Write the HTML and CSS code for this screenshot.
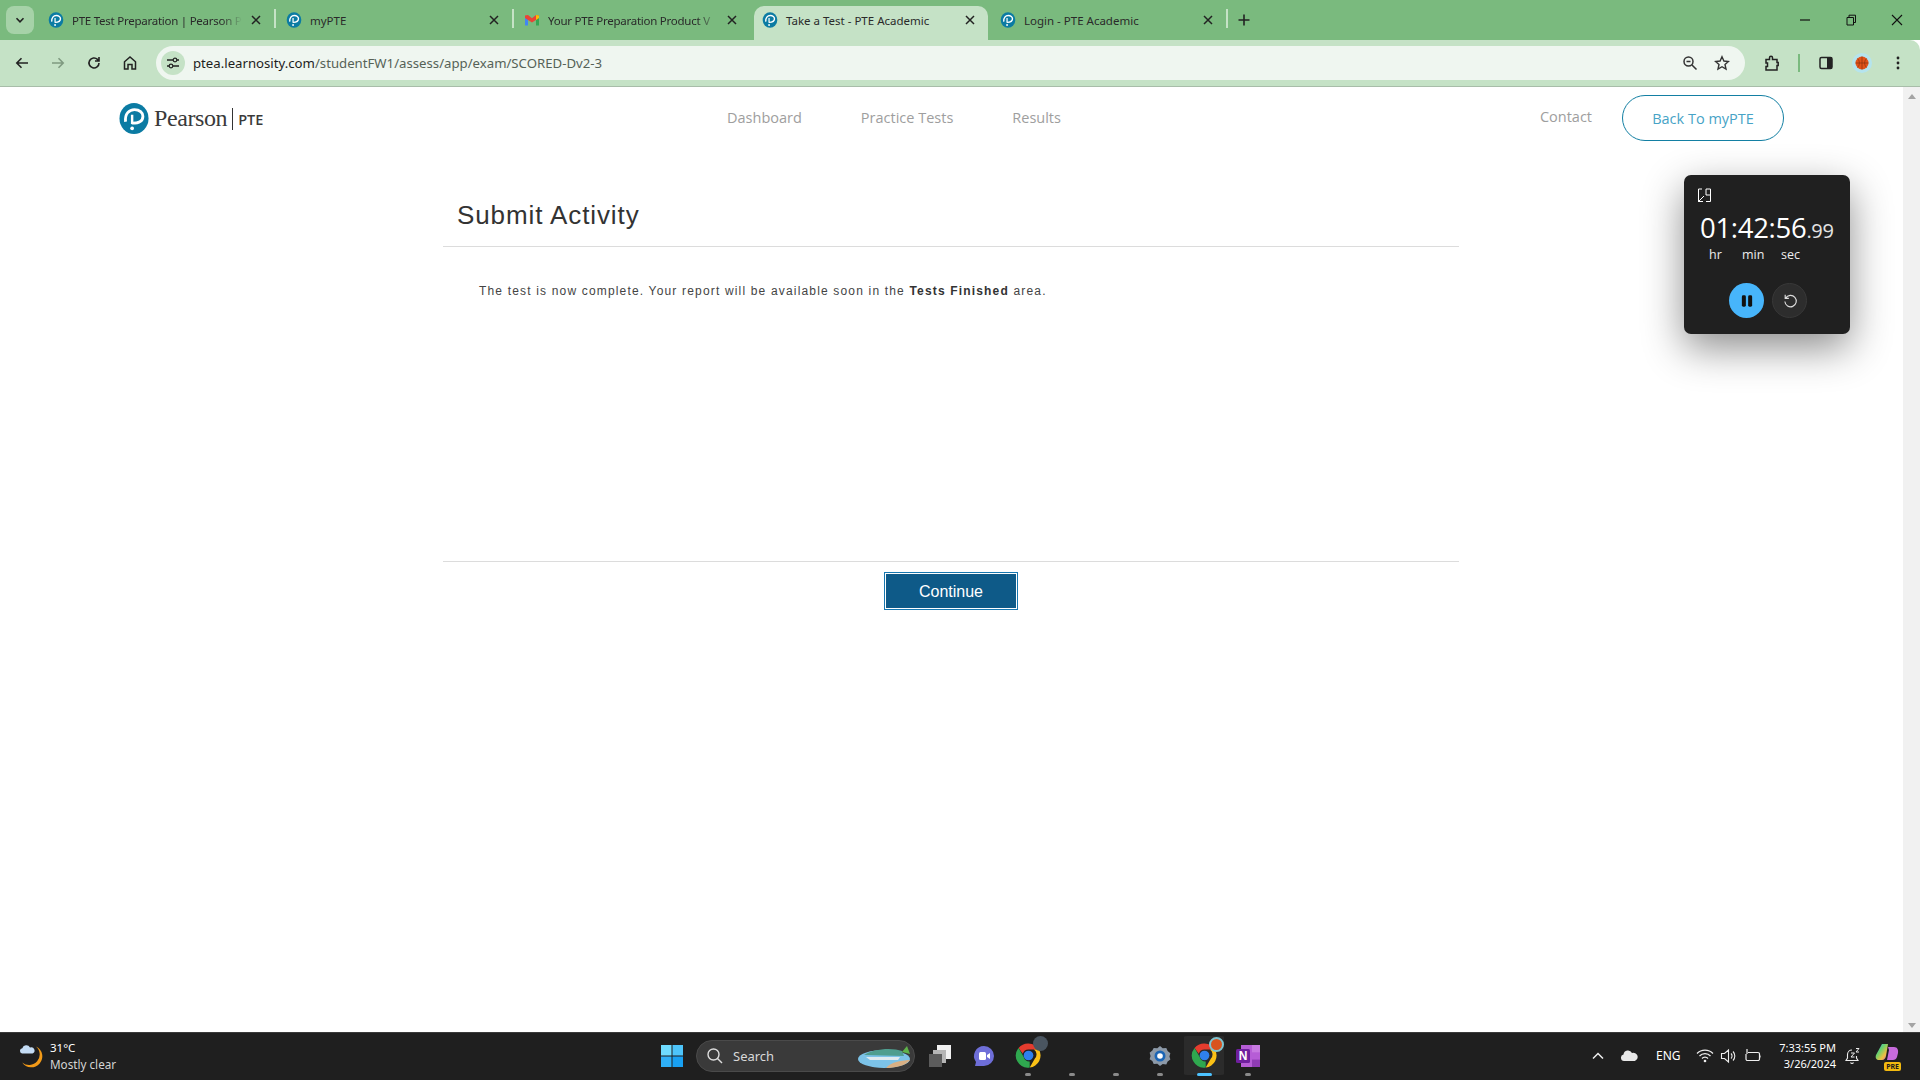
FILE: index.html
```html
<!DOCTYPE html>
<html lang="en">
<head>
  <meta charset="UTF-8">
  <title>Take a Test - PTE Academic</title>
  <link rel="stylesheet" href="styles.css">
</head>
<body>
  <svg class="defs" width="0" height="0">
    <symbol id="pearson" viewBox="0 0 32 34">
      <ellipse cx="16" cy="17" rx="15.500" ry="16.500" fill="#0b7ba3"/>
      <path d="M7 20.500C6 12 11 7.500 16.500 7.500c5.500 0 9 3.500 9 7 0 4.500-4 7.500-11.500 7.500" fill="none" stroke="#fff" stroke-width="3"/>
      <path d="M14 13v10" fill="none" stroke="#fff" stroke-width="2.600"/>
      <circle cx="14" cy="27.500" r="2" fill="#fff"/>
    </symbol>
    <symbol id="chrome" viewBox="0 0 48 48">
      <path d="M24 4a20 20 0 0 1 17.300 10H24a10 10 0 0 0-9.500 7L7.600 11.500A20 20 0 0 1 24 4z" fill="#e53c2e"/>
      <path d="M41.300 14A20 20 0 0 1 26 43.900l8.600-14.900A10 10 0 0 0 33 14z" fill="#fbc116"/>
      <path d="M7.600 11.500l8.500 15A10 10 0 0 0 26 33.800l-0 10.100A20 20 0 0 1 7.600 11.500z" fill="#2fa84f"/>
      <circle cx="24" cy="24" r="8" fill="#2f80ed"/>
    </symbol>
    <symbol id="close" viewBox="0 0 16 16">
      <path d="M4 4l8 8M12 4l-8 8" stroke="#222" stroke-width="1.500" fill="none"/>
    </symbol>
  </svg>

  <div class="tabstrip">
    <div class="tab-menu">
      <svg width="10" height="10" viewBox="0 0 10 10"><path d="M1.500 3.200L5 6.800l3.500-3.600" fill="none" stroke="#222" stroke-width="1.600"/></svg>
    </div>
    <div class="tab">
      <svg class="favicon"><use href="#pearson"/></svg>
      <span class="tab-title fade">PTE Test Preparation | Pearson P</span>
      <svg class="tab-close"><use href="#close"/></svg>
    </div>
    <div class="tab">
      <svg class="favicon"><use href="#pearson"/></svg>
      <span class="tab-title">myPTE</span>
      <svg class="tab-close"><use href="#close"/></svg>
    </div>
    <div class="tab no-sep">
      <svg class="favicon" viewBox="0 0 16 16">
        <path d="M1 3.500v10h3V7z" fill="#4285f4"/>
        <path d="M15 3.500v10h-3V7z" fill="#34a853"/>
        <path d="M1 3.500L4 3l4 3.200L12 3l3 .5V6L8 10.500 1 6z" fill="#ea4335"/>
        <path d="M12 3l3 .5V6l-3 2z" fill="#fbbc04"/>
      </svg>
      <span class="tab-title fade">Your PTE Preparation Product V</span>
      <svg class="tab-close"><use href="#close"/></svg>
    </div>
    <div class="tab active no-sep">
      <svg class="favicon"><use href="#pearson"/></svg>
      <span class="tab-title">Take a Test - PTE Academic</span>
      <svg class="tab-close"><use href="#close"/></svg>
    </div>
    <div class="tab">
      <svg class="favicon"><use href="#pearson"/></svg>
      <span class="tab-title">Login - PTE Academic</span>
      <svg class="tab-close"><use href="#close"/></svg>
    </div>
    <svg class="new-tab" width="16" height="16" viewBox="0 0 16 16"><path d="M8 2.500v11M2.500 8h11" stroke="#222" stroke-width="1.600"/></svg>
    <div class="window-controls">
      <svg width="14" height="14" viewBox="0 0 14 14"><path d="M2 7h10" stroke="#111" stroke-width="1.200"/></svg>
      <svg width="14" height="14" viewBox="0 0 14 14"><path d="M3 4.500h6.500v7.500H3zM5 4.500V2.200h6.500v7.300H9.500" fill="none" stroke="#111"/></svg>
      <svg width="14" height="14" viewBox="0 0 14 14"><path d="M2 2l10 10M12 2L2 12" stroke="#111" stroke-width="1.100"/></svg>
    </div>
  </div>

  <div class="toolbar">
    <svg class="tool" viewBox="0 0 16 16"><path d="M14 8H3M7.500 3.200L2.800 8l4.700 4.800" fill="none" stroke="#222" stroke-width="1.600"/></svg>
    <svg class="tool" viewBox="0 0 16 16"><path d="M2 8h11M8.500 3.200L13.200 8l-4.700 4.800" fill="none" stroke="#7f9a80" stroke-width="1.600"/></svg>
    <svg class="tool" viewBox="0 0 16 16"><path d="M13 8a5 5 0 1 1-1.500-3.600L13 6M13 2v4H9" fill="none" stroke="#222" stroke-width="1.600"/></svg>
    <svg class="tool" viewBox="0 0 16 16"><path d="M2.500 14V6.800L8 2l5.500 4.800V14h-3.500V9.500H6V14z" fill="none" stroke="#222" stroke-width="1.500"/></svg>
    <div class="omnibox">
      <span class="site-info">
        <svg width="14" height="14" viewBox="0 0 14 14"><path d="M1 4h6M11 4h2M1 10h2M7 10h6" stroke="#222" stroke-width="1.300"/><circle cx="9" cy="4" r="1.800" fill="none" stroke="#222" stroke-width="1.200"/><circle cx="5" cy="10" r="1.800" fill="none" stroke="#222" stroke-width="1.200"/></svg>
      </span>
      <span class="url"><span class="url-host">ptea.learnosity.com</span>/studentFW1/assess/app/exam/SCORED-Dv2-3</span>
      <svg class="omni-icon" viewBox="0 0 16 16"><circle cx="6.500" cy="6.500" r="4.500" fill="none" stroke="#333" stroke-width="1.500"/><path d="M4.500 6.500h4M10 10l4.500 4.500" stroke="#333" stroke-width="1.500"/></svg>
      <svg class="omni-icon" viewBox="0 0 16 16"><path d="M8 1.800l1.900 4.200 4.500.5-3.400 3 1 4.500-4-2.300-4 2.300 1-4.500-3.400-3 4.500-.5z" fill="none" stroke="#333" stroke-width="1.400"/></svg>
    </div>
    <svg class="tool ext" viewBox="0 0 16 16"><path d="M2 4.500h3.500V2.800a1.500 1.500 0 0 1 3 0v1.700H13v3h1.200v3H13v4.500H2v-3.500h1.500v-3.500H2z" fill="none" stroke="#222" stroke-width="1.500"/></svg>
    <span class="tool-sep"></span>
    <svg class="tool side" viewBox="0 0 16 16"><rect x="2" y="2.500" width="12" height="11" rx="1.500" fill="none" stroke="#222" stroke-width="1.500"/><path d="M9 2.500h5v11H9z" fill="#222"/></svg>
    <span class="avatar">
      <svg width="14" height="14" viewBox="0 0 14 14"><circle cx="7" cy="7" r="6.500" fill="#e2531a"/><path d="M7 .5v13M.5 7h13M2.500 2.500c2.500 2.500 2.500 6.500 0 9M11.500 2.500c-2.500 2.500-2.500 6.500 0 9" fill="none" stroke="#8a3210" stroke-width=".7"/></svg>
    </span>
    <svg class="tool menu" viewBox="0 0 16 16"><circle cx="8" cy="3" r="1.400" fill="#222"/><circle cx="8" cy="8" r="1.400" fill="#222"/><circle cx="8" cy="13" r="1.400" fill="#222"/></svg>
  </div>

  <div class="viewport">
    <div class="page">
      <header class="site-header">
        <div class="logo">
          <svg class="logo-mark"><use href="#pearson"/></svg>
          <span class="logo-name">Pearson</span>
          <span class="logo-bar"></span>
          <span class="logo-pte">PTE</span>
        </div>
        <nav class="nav">
          <a>Dashboard</a>
          <a>Practice Tests</a>
          <a>Results</a>
        </nav>
        <a class="contact">Contact</a>
        <a class="back-btn">Back To myPTE</a>
      </header>

      <main class="activity">
        <h1 class="activity-title">Submit Activity</h1>
        <p class="activity-text">The test is now complete. Your report will be available soon in the <strong>Tests Finished</strong> area.</p>
        <div class="activity-footer">
          <button class="continue">Continue</button>
        </div>
      </main>

      <div class="timer">
        <svg class="timer-expand" width="15" height="15" viewBox="0 0 15 15"><path d="M5 1H1.500v12.500H6M9 1h4.500v12.500H9M1.500 13.500L7 8M1.500 9.500v4h4M9 1v6h4.500" fill="none" stroke="#fff"/></svg>
        <div class="timer-digits">01:42:56<small>.99</small></div>
        <div class="timer-units"><span>hr</span><span>min</span><span>sec</span></div>
        <div class="timer-buttons">
          <span class="timer-pause"><svg width="16" height="16" viewBox="0 0 14 14"><rect x="2.500" y="2" width="3.500" height="10" rx="1.200" fill="#111"/><rect x="8" y="2" width="3.500" height="10" rx="1.200" fill="#111"/></svg></span>
          <span class="timer-reset"><svg width="16" height="16" viewBox="0 0 14 14"><path d="M3.200 4.500a5 5 0 1 1-.7 3M2.800 1.500v3.200H6" fill="none" stroke="#ddd"/></svg></span>
        </div>
      </div>
    </div>

    <div class="scrollbar">
      <span class="arrow-up"></span>
      <span class="arrow-down"></span>
    </div>
  </div>

  <footer class="taskbar">
    <div class="weather">
      <svg width="24" height="24" viewBox="0 0 24 24">
        <path d="M17 2.400A11 11 0 1 1 3.200 18.500 10 10 0 0 0 17 2.400z" fill="#f29a18"/>
        <path d="M3 9.500a2.700 2.700 0 0 1 .3-5.300A4.200 4.200 0 0 1 11 3.500a3 3 0 0 1 2.500 6z" fill="#c4dcf5"/>
      </svg>
      <div class="weather-text">
        <div class="temp">31°C</div>
        <div class="cond">Mostly clear</div>
      </div>
    </div>

    <div class="task-center">
      <svg class="start" width="24" height="24" viewBox="0 0 24 24">
        <rect x="1" y="1" width="10.500" height="10.500" fill="#6fdcff"/><rect x="12.500" y="1" width="10.500" height="10.500" fill="#4dc4fa"/>
        <rect x="1" y="12.500" width="10.500" height="10.500" fill="#2fb0f7"/><rect x="12.500" y="12.500" width="10.500" height="10.500" fill="#18a0f2"/>
      </svg>
      <div class="search">
        <svg width="18" height="18" viewBox="0 0 18 18"><circle cx="7.500" cy="7.500" r="5.500" fill="none" stroke="#ddd" stroke-width="1.400"/><path d="M11.500 11.500l4.500 4.500" stroke="#ddd" stroke-width="1.400"/></svg>
        <span class="search-label">Search</span>
        <svg class="search-art" width="52" height="24" viewBox="0 0 52 24">
          <ellipse cx="26" cy="15" rx="26" ry="9" fill="#7cc3e8"/>
          <path d="M28 24c8 0 20-2 24-8-6 0-20 2-24 8z" fill="#d9b084"/>
          <path d="M6 11c8-6 28-8 38-4l2 5z" fill="#4f9e8f"/>
          <path d="M44 8l5-6 3 8z" fill="#5fb24a"/>
          <path d="M8 13h34l-2 3H12z" fill="#dfeaf0"/>
        </svg>
      </div>
      <span class="task-item pinned">
        <svg width="24" height="24" viewBox="0 0 24 24"><rect x="9" y="1" width="14" height="14" fill="#f1f1f1"/><rect x="5" y="6" width="13" height="13" fill="#b5b5b5"/><rect x="1" y="10" width="13" height="13" fill="#5c5c5c"/></svg>
      </span>
      <span class="task-item pinned">
        <svg width="24" height="24" viewBox="0 0 24 24"><path d="M12 2a10 10 0 0 1 0 20H3l1-4a10 10 0 0 1 8-16z" fill="#6e6ed8"/><rect x="7" y="8" width="7" height="8" rx="1.500" fill="#fff"/><path d="M15 11l3-2v6l-3-2z" fill="#fff"/></svg>
      </span>
      <span class="task-item running">
        <svg class="chrome-icon"><use href="#chrome"/></svg>
        <span class="person-badge"></span>
      </span>
      <span class="task-item running"></span>
      <span class="task-item running"></span>
      <span class="task-item running">
        <svg width="24" height="24" viewBox="0 0 24 24"><path d="M12 1l3 2.500 4-.5 1.500 3.500 3 2.500-1 3.500 1 3.500-3 2-1.500 3.500-4-.5L12 23l-3-2.500-4 .5-1.500-3.500-3-2 1-3.500-1-3.500 3-2.500L5 3l4 .5z" fill="#8c99a8" transform="translate(1.200 1.200) scale(.9)"/><circle cx="12" cy="12" r="5.500" fill="#1b65b5"/><circle cx="12" cy="12" r="2.800" fill="#fff"/></svg>
      </span>
      <span class="task-item running active">
        <svg class="chrome-icon"><use href="#chrome"/></svg>
        <span class="ball-badge"></span>
      </span>
      <span class="task-item running">
        <svg width="24" height="24" viewBox="0 0 24 24"><rect x="5" y="1" width="19" height="22" fill="#b65dd6"/><rect x="16" y="1" width="8" height="7.300" fill="#c77ae0"/><rect x="16" y="15.600" width="8" height="7.400" fill="#8f3cb4"/><rect x="0" y="5" width="14" height="14" rx="1.500" fill="#6f1f9e"/><text x="7" y="16" class="onenote-n">N</text></svg>
      </span>
    </div>

    <div class="tray">
      <svg class="tray-chevron" width="14" height="14" viewBox="0 0 14 14"><path d="M2 9.500L7 4.500l5 5" fill="none" stroke="#eee" stroke-width="1.500"/></svg>
      <svg class="tray-cloud" width="18" height="14" viewBox="0 0 18 14"><path d="M4 12a3.300 3.300 0 0 1-.5-6.500A4.500 4.500 0 0 1 12 4a3.800 3.800 0 0 1 2.800 8z" fill="#e8e8e8"/></svg>
      <span class="tray-lang">ENG</span>
      <svg class="tray-icon" width="18" height="16" viewBox="0 0 18 16"><path d="M1 5.500a11 11 0 0 1 16 0M3.500 8a7.500 7.500 0 0 1 11 0M6 10.500a4 4 0 0 1 6 0" fill="none" stroke="#eee" stroke-width="1.200"/><circle cx="9" cy="13" r="1.300" fill="#eee"/></svg>
      <svg class="tray-icon" width="18" height="16" viewBox="0 0 18 16"><path d="M1.500 5.500h3L8.500 2v12l-4-3.500h-3zM11 5.500a3.500 3.500 0 0 1 0 5M13 3.500a6.500 6.500 0 0 1 0 9" fill="none" stroke="#eee" stroke-width="1.100"/></svg>
      <svg class="tray-icon" width="18" height="16" viewBox="0 0 18 16"><path d="M4 4.500h10a1.500 1.500 0 0 1 1.500 1.500v5a1.500 1.500 0 0 1-1.500 1.500H3.500A1.500 1.500 0 0 1 2 11V6M16 7.500v2" fill="none" stroke="#eee" stroke-width="1.200"/><path d="M3 1v5" stroke="#eee" stroke-width="1.200"/></svg>
      <div class="clock">
        <div>7:33:55 PM</div>
        <div>3/26/2024</div>
      </div>
      <svg class="tray-bell" width="16" height="18" viewBox="0 0 16 18"><path d="M8 3a4.500 4.500 0 0 0-4.500 4.500V11L2 13.500h12L12.500 11V9M6.500 15.500a1.700 1.700 0 0 0 3 0" fill="none" stroke="#eee" stroke-width="1.100"/><path d="M7 6h3.500L7 10h3.500M12 1.500h3L12 5h3" fill="none" stroke="#eee"/></svg>
      <span class="copilot">
        <svg width="24" height="20" viewBox="0 0 24 20">
          <defs>
            <linearGradient id="cop" x1="0" y1="0" x2="1" y2="1">
              <stop offset="0" stop-color="#2fb7e8"/><stop offset=".4" stop-color="#6fd06a"/><stop offset=".7" stop-color="#f0c040"/><stop offset="1" stop-color="#d85cc8"/>
            </linearGradient>
          </defs>
          <path d="M7 1h6l-2 12c-.4 2-1.500 4-4 4H4c-2.500 0-4-2-3-5z" fill="url(#cop)"/>
          <path d="M13 4h6c3.500 0 4.500 3 4 6l-1 4c-.6 2-2 3-4 3h-6l2-10z" fill="#c76bdc"/>
        </svg>
        <span class="pre">PRE</span>
      </span>
    </div>
  </footer>
</body>
</html>
```

FILE: styles.css
```css
* {
  box-sizing: border-box;
}

html,
body {
  margin: 0;
  height: 100%;
}

body {
  width: 1920px;
  height: 1080px;
  overflow: hidden;
  display: flex;
  flex-direction: column;
  font-family: "Open Sans", "Liberation Sans", sans-serif;
  background-color: #ffffff;
}

.defs {
  position: absolute;
}

/* browser tabs */
.tabstrip {
  height: 40px;
  display: flex;
  background-color: #7aba7e;
  padding-left: 6px;
}

.tab-menu {
  width: 28px;
  height: 28px;
  margin: 6px 4px 0 0;
  border-radius: 8px;
  background-color: #a6d2a8;
  display: flex;
  align-items: center;
  justify-content: center;
}

.tab {
  position: relative;
  width: 238px;
  height: 34px;
  margin-top: 6px;
  padding: 0 12px 6px 10px;
  display: flex;
  align-items: center;
  font-family: "Noto Sans", sans-serif;
  font-size: 11.5px;
  color: #2a2a2a;
}

.tab::after {
  content: "";
  position: absolute;
  right: 0;
  top: 3px;
  height: 19px;
  width: 2px;
  background-color: #c5e2c6;
}

.tab.no-sep::after {
  display: none;
}

.tab.active {
  background-color: #c5e2c6;
  border-radius: 10px 10px 0 0;
  margin-left: 2px;
  margin-right: 2px;
  width: 234px;
  padding-left: 8px;
  padding-right: 10px;
}

.favicon {
  width: 16px;
  height: 16px;
  flex: none;
}

.tab-title {
  margin-left: 8px;
  white-space: nowrap;
}

.tab-title.fade {
  width: 170px;
  letter-spacing: -0.25px;
  -webkit-mask-image: linear-gradient(to right, #000 150px, transparent 170px);
  mask-image: linear-gradient(to right, #000 150px, transparent 170px);
}

.tab-close {
  width: 16px;
  height: 16px;
  margin-left: auto;
  flex: none;
}

.new-tab {
  margin: 12px 0 0 8px;
}

.window-controls {
  margin-left: auto;
  height: 30px;
  padding: 13px 16px 0 0;
  display: flex;
  gap: 32px;
}

/* browser toolbar */
.toolbar {
  height: 47px;
  padding: 6px 0 6px 14px;
  display: flex;
  align-items: center;
  background-color: #c5e2c6;
  border-bottom: 1px solid #a8bda9;
  border-radius: 0 10px 0 0;
}

.tool {
  width: 16px;
  height: 16px;
  margin-right: 20px;
  flex: none;
}

.omnibox {
  width: 1589px;
  height: 34px;
  margin-left: -2px;
  padding: 0 7px 0 5px;
  display: flex;
  align-items: center;
  border-radius: 17px;
  background-color: #eff6f0;
}

.site-info {
  width: 24px;
  height: 24px;
  border-radius: 50%;
  background-color: #c5e2c6;
  display: flex;
  align-items: center;
  justify-content: center;
}

.url {
  margin-left: 8px;
  flex: 1;
  font-family: "Noto Sans", sans-serif;
  font-size: 13.2px;
  color: #566257;
}

.url-host {
  color: #1d1d1d;
}

.omni-icon {
  width: 16px;
  height: 16px;
  margin: 0 8px;
}

.tool.ext {
  margin-left: 19px;
  margin-right: 18px;
}

.tool-sep {
  width: 2px;
  height: 18px;
  background-color: #7aba7e;
  margin-right: 18px;
}

.tool.side {
  margin-right: 18px;
}

.avatar {
  width: 20px;
  height: 20px;
  border-radius: 50%;
  background-color: #b5e4ee;
  display: flex;
  align-items: center;
  justify-content: center;
  margin-right: 18px;
}

.tool.menu {
  margin-right: 0;
}

/* page area */
.viewport {
  flex: 1;
  display: flex;
  min-height: 0;
}

.page {
  position: relative;
  flex: 1;
}

.scrollbar {
  width: 17px;
  display: flex;
  flex-direction: column;
  justify-content: space-between;
  align-items: center;
  padding: 7px 0 4px;
  background-color: #f1f1f1;
}

.arrow-up,
.arrow-down {
  width: 0;
  height: 0;
  border-left: 4px solid transparent;
  border-right: 4px solid transparent;
}

.arrow-up {
  border-bottom: 5px solid #a3a3a3;
}

.arrow-down {
  border-top: 5px solid #a3a3a3;
}

.site-header {
  height: 60px;
  padding: 2px 0 0 119px;
  display: flex;
  align-items: center;
}

.logo {
  width: 146px;
  display: flex;
  align-items: center;
}

.logo-mark {
  width: 30px;
  height: 33px;
  flex: none;
}

.logo-name {
  margin-left: 5px;
  font-family: "Liberation Serif", serif;
  font-size: 24px;
  letter-spacing: -0.4px;
  color: #3a3a3a;
}

.logo-bar {
  width: 1px;
  height: 22px;
  margin: 2px 5px 0 5px;
  background-color: #333;
}

.logo-pte {
  margin-top: 2px;
  font-size: 14.5px;
  font-weight: 600;
  color: #3a3a3a;
}

.nav {
  margin-left: 462px;
  margin-top: -2px;
  display: flex;
  gap: 59px;
  font-size: 14.5px;
  color: #9e9e9e;
}

.contact {
  margin-left: 479px;
  margin-top: -3px;
  font-size: 14.5px;
  color: #9e9e9e;
}

.back-btn {
  width: 162px;
  height: 46px;
  margin-left: 30px;
  border: 1px solid #137fa3;
  border-radius: 23px;
  display: flex;
  align-items: center;
  justify-content: center;
  font-size: 14.5px;
  color: #47a3c6;
}

.activity {
  width: 1016px;
  margin: 40px 0 0 443px;
  font-family: "Liberation Sans", sans-serif;
}

.activity-title {
  margin: 0;
  height: 60px;
  padding: 10px 0 0 14px;
  border-bottom: 1px solid #dcdcdc;
  font-size: 26px;
  font-weight: 400;
  line-height: 36px;
  letter-spacing: 0.9px;
  color: #333;
}

.activity-text {
  margin: 0;
  height: 315px;
  padding: 35px 0 0 36px;
  font-size: 12px;
  line-height: 18px;
  letter-spacing: 1.17px;
  color: #444;
  border-bottom: 1px solid #dcdcdc;
}

.activity-text strong {
  color: #333;
}

.activity-footer {
  padding-top: 10px;
  display: flex;
  justify-content: center;
}

.continue {
  width: 134px;
  height: 38px;
  padding-top: 3px;
  border: 1px solid #1777b0;
  outline: 1px solid #ffffff;
  outline-offset: -2px;
  background-color: #0e5a88;
  color: #ffffff;
  font-family: "Liberation Sans", sans-serif;
  font-size: 16px;
}

/* floating stopwatch */
.timer {
  position: absolute;
  left: 1684px;
  top: 88px;
  width: 166px;
  height: 159px;
  padding: 13px 0 0;
  border-radius: 7px;
  background-color: #202020;
  color: #ffffff;
  font-family: "Open Sans", sans-serif;
  box-shadow: 0 14px 40px rgba(0, 0, 0, 0.45);
}

.timer-expand {
  display: block;
  margin-left: 13px;
}

.timer-digits {
  margin-top: 9px;
  padding-left: 16px;
  font-size: 27.5px;
  line-height: 32px;
  letter-spacing: -0.3px;
  white-space: nowrap;
}

.timer-digits small {
  font-size: 20px;
  color: #e4e4e4;
}

.timer-units {
  display: flex;
  padding-left: 25px;
  font-size: 12.5px;
  line-height: 16px;
  color: #eeeeee;
}

.timer-units span:nth-child(1) {
  width: 33px;
}

.timer-units span:nth-child(2) {
  width: 39px;
}

.timer-buttons {
  margin-top: 20px;
  padding-left: 45px;
  display: flex;
  gap: 8px;
}

.timer-pause,
.timer-reset {
  width: 35px;
  height: 35px;
  border-radius: 50%;
  display: flex;
  align-items: center;
  justify-content: center;
}

.timer-pause {
  background-color: #47b5fb;
}

.timer-reset {
  background-color: #2d2d2d;
  border: 1px solid #383838;
}

/* windows taskbar */
.taskbar {
  position: relative;
  height: 48px;
  padding-bottom: 2px;
  display: flex;
  align-items: center;
  background-color: #1f1f1f;
  border-top: 1px solid #3a3a3a;
  font-family: "Noto Sans", sans-serif;
  color: #ffffff;
}

.weather {
  width: 660px;
  padding-left: 19px;
  display: flex;
  align-items: center;
  gap: 7px;
}

.weather-text {
  font-size: 11.5px;
  line-height: 16px;
}

.cond {
  font-size: 11.7px;
  color: #d4d4d4;
}

.task-center {
  display: flex;
  align-items: center;
}

.start {
  flex: none;
}

.search {
  width: 219px;
  height: 32px;
  margin-left: 12px;
  padding: 0 0 0 9px;
  border-radius: 16px;
  border: 1px solid #4a4a4a;
  background-color: #3a3a3a;
  display: flex;
  align-items: center;
  font-size: 13px;
  color: #d8d8d8;
}

.search-label {
  margin-left: 9px;
}

.search-art {
  margin-left: auto;
  margin-right: 4px;
}

.task-item {
  position: relative;
  width: 44px;
  height: 47px;
  display: flex;
  align-items: center;
  justify-content: center;
}

.task-item.pinned:first-of-type {
  margin-left: 3px;
}

.task-item.running::after {
  content: "";
  position: absolute;
  left: 19px;
  bottom: 3px;
  width: 6px;
  height: 3px;
  border-radius: 2px;
  background-color: #8a8a8a;
}

.task-item.active {
  background-color: #2b2b2b;
  background-clip: content-box;
  padding: 4px 2px 4px 2px;
  border-radius: 5px;
}

.task-item.active::after {
  left: 15px;
  width: 15px;
  background-color: #4cc2ff;
}

.chrome-icon {
  width: 29px;
  height: 29px;
}

.person-badge,
.ball-badge {
  position: absolute;
  top: 4px;
  left: 27px;
  width: 15px;
  height: 15px;
  border-radius: 50%;
}

.person-badge {
  background-color: #4a5560;
}

.ball-badge {
  top: 5px;
  background-color: #d9531e;
  border: 2px solid #7fc3cf;
}

.onenote-n {
  font-family: "Liberation Sans", sans-serif;
  font-size: 12px;
  font-weight: 700;
  fill: #ffffff;
  text-anchor: middle;
}

.tray {
  position: absolute;
  right: 0;
  top: 0;
  height: 45px;
  display: flex;
  align-items: center;
}

.tray-chevron {
  margin-right: 15px;
}

.tray-cloud {
  margin-right: 18px;
}

.tray-lang {
  width: 24px;
  margin-right: 16px;
  font-size: 12px;
}

.tray-icon {
  margin-right: 6px;
}

.clock {
  width: 65px;
  margin-left: 3px;
  text-align: right;
  font-size: 11px;
  line-height: 16px;
}

.tray-bell {
  margin-left: 8px;
}

.copilot {
  position: relative;
  width: 24px;
  height: 26px;
  margin: 0 21px 0 15px;
}

.pre {
  position: absolute;
  right: -2px;
  bottom: -2px;
  padding: 0 2px;
  border-radius: 2px;
  background-color: #f2b90f;
  color: #1a1a1a;
  font-size: 7px;
  font-weight: 700;
  line-height: 9px;
}
```
